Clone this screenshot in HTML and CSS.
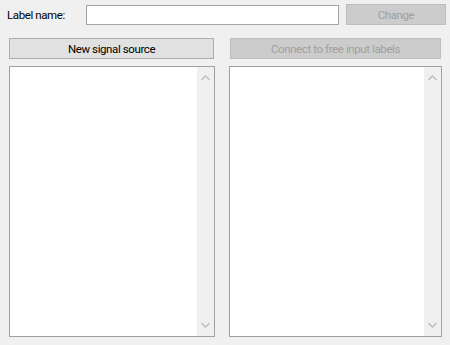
FILE: index.html
```html
<!DOCTYPE html>
<html lang="en">
<head>
    <meta charset="UTF-8">
    <title>Signal labels</title>
    <link rel="stylesheet" href="styles.css">
</head>
<body>
    <!-- label name row -->
    <div class="name-row">
        <label class="name-label" for="labelName">Label name:</label>
        <input class="name-input" id="labelName" type="text">
        <button class="win-btn disabled change-btn" disabled>Change</button>
    </div>

    <!-- two list columns -->
    <div class="columns">
        <div class="column left-col">
            <button class="win-btn col-btn">New signal source</button>
            <div class="list-box">
                <div class="list-items"></div>
                <div class="scrollbar">
                    <svg class="arrow" width="9" height="6" viewBox="0 0 9 6"><path d="M0.5 5 L4.5 1 L8.5 5" fill="none" stroke="#c2c2c2" stroke-width="1.6"/></svg>
                    <svg class="arrow" width="9" height="6" viewBox="0 0 9 6"><path d="M0.5 1 L4.5 5 L8.5 1" fill="none" stroke="#c2c2c2" stroke-width="1.6"/></svg>
                </div>
            </div>
        </div>
        <div class="column right-col">
            <button class="win-btn disabled col-btn" disabled>Connect to free input labels</button>
            <div class="list-box">
                <div class="list-items"></div>
                <div class="scrollbar">
                    <svg class="arrow" width="9" height="6" viewBox="0 0 9 6"><path d="M0.5 5 L4.5 1 L8.5 5" fill="none" stroke="#c2c2c2" stroke-width="1.6"/></svg>
                    <svg class="arrow" width="9" height="6" viewBox="0 0 9 6"><path d="M0.5 1 L4.5 5 L8.5 1" fill="none" stroke="#c2c2c2" stroke-width="1.6"/></svg>
                </div>
            </div>
        </div>
    </div>
</body>
</html>
```

FILE: styles.css
```css
/* whole window */
body {
    margin: 0;
    width: 450px;
    height: 345px;
    background-color: #f0f0f0;
    font-family: Roboto, "Liberation Sans", Arial, sans-serif;
    font-size: 11.5px;
    letter-spacing: -0.4px;
    color: #000;
    overflow: hidden;
}

/* top row */
.name-row {
    display: flex;
    align-items: flex-start;
    padding-top: 4px;
    height: 21px;
}

.name-label {
    width: 79px;
    padding-left: 7px;
    line-height: 21px;
    margin-top: 1px;
}

.name-input {
    box-sizing: border-box;
    width: 253px;
    height: 20px;
    margin: 1px 0 0 0;
    padding: 0 3px;
    border: 1px solid #a5a5a5;
    background-color: #fff;
    font: inherit;
    outline: none;
}

/* windows style buttons */
.win-btn {
    box-sizing: border-box;
    height: 21px;
    padding: 0;
    border: 1px solid #adadad;
    background-color: #e1e1e1;
    font: inherit;
    letter-spacing: inherit;
    color: #000;
}

.win-btn.disabled {
    border-color: #bfbfbf;
    background-color: #cccccc;
    color: #a0a0a0;
}

.change-btn {
    width: 100px;
    margin-left: 7px;
}

/* columns */
.columns {
    display: flex;
    gap: 14px;
    padding-left: 9px;
    margin-top: 13px;
}

.column {
    display: flex;
    flex-direction: column;
}

.left-col {
    width: 206px;
}

.right-col {
    width: 213px;
}

.left-col .col-btn {
    width: 205px;
}

.right-col .col-btn {
    width: 211px;
    margin-left: 1px;
}

.list-box {
    box-sizing: border-box;
    display: flex;
    height: 271px;
    margin-top: 7px;
    border: 1px solid #a0a0a0;
    background-color: #fff;
}

.list-items {
    flex: 1;
}

.scrollbar {
    width: 17px;
    background-color: #f0f0f0;
    display: flex;
    flex-direction: column;
    justify-content: space-between;
    align-items: center;
    padding: 8px 0;
}

.arrow {
    display: block;
}
```
